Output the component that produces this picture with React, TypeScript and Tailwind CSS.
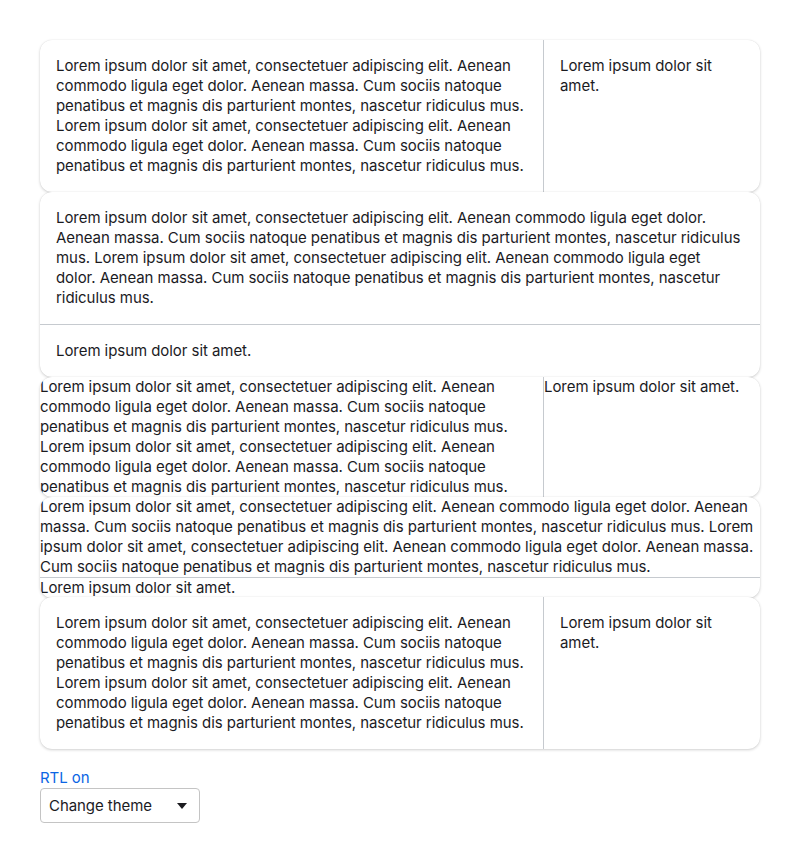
import React from 'react';

const LONG =
  'Lorem ipsum dolor sit amet, consectetuer adipiscing elit. Aenean commodo ligula eget dolor. Aenean massa. Cum sociis natoque penatibus et magnis dis parturient montes, nascetur ridiculus mus. Lorem ipsum dolor sit amet, consectetuer adipiscing elit. Aenean commodo ligula eget dolor. Aenean massa. Cum sociis natoque penatibus et magnis dis parturient montes, nascetur ridiculus mus.';
const SHORT = 'Lorem ipsum dolor sit amet.';

const card = 'bg-white rounded-xl shadow-[0_1px_3px_rgba(0,0,0,0.18),0_0_1px_rgba(0,0,0,0.12)] overflow-hidden';

const RowCard: React.FC<{ padded?: boolean; className?: string }> = ({ padded = true, className = '' }) => (
  <div className={`${card} flex ${className}`}>
    <div className={`w-[70%] border-r border-[#c6cacf] ${padded ? 'p-4' : ''}`}>{LONG}</div>
    <div className={`w-[30%] ${padded ? 'p-4' : ''}`}>{SHORT}</div>
  </div>
);

const StackCard: React.FC<{ padded?: boolean }> = ({ padded = true }) => (
  <div className={`${card} flex flex-col`}>
    <div className={`border-b border-[#c6cacf] ${padded ? 'p-4' : ''}`}>{LONG}</div>
    <div className={padded ? 'p-4' : ''}>{SHORT}</div>
  </div>
);

export default function App() {
  return (
    <div className="min-h-screen bg-white px-10 pt-10 text-[15px] leading-5 tracking-[-0.06px] text-[#1b1b1f] font-['Inter',sans-serif]">
      <div className="w-[720px] flex flex-col">
        <RowCard />
        <StackCard />
        <RowCard padded={false} />
        <StackCard padded={false} />
        <RowCard className="-mt-px" />
      </div>
      <div className="mt-[19px] text-[#0b66e4]">RTL on</div>
      <button className="flex h-[35px] w-40 items-center justify-between rounded border border-[#c4c4c4] bg-white pl-2 pr-3 text-[15px]">
        <span>Change theme</span>
        <svg width="10" height="6" viewBox="0 0 10 6">
          <path d="M0 0h10L5 6z" fill="#1b1b1f" />
        </svg>
      </button>
    </div>
  );
}
